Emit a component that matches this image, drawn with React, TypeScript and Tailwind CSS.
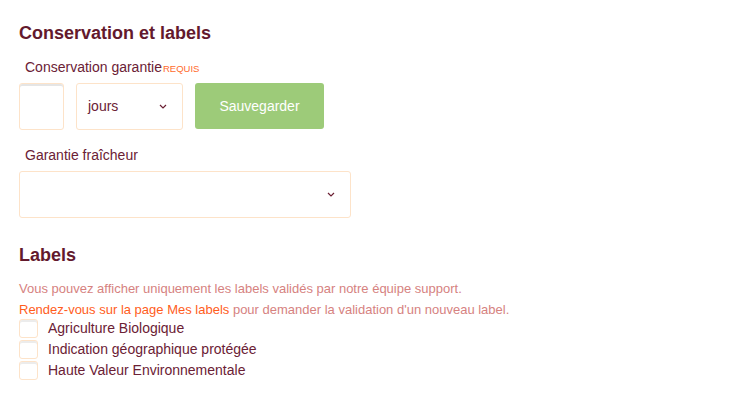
const Chevron = () => (
  <svg width="8" height="5" viewBox="0 0 8 5" fill="none">
    <path d="M1 1l3 3 3-3" stroke="#6b1f33" strokeWidth="1.2" />
  </svg>
);

const labels = [
  "Agriculture Biologique",
  "Indication géographique protégée",
  "Haute Valeur Environnementale",
];

export default function App() {
  return (
    <div
      className="bg-white w-[729px] h-[411px] px-[19px] pt-[22px] text-[#6b2135]"
      style={{ fontFamily: '"Liberation Sans", Arial, sans-serif' }}
    >
      <h1 className="text-[18px] font-bold text-[#63192d] leading-[22px]">
        Conservation et labels
      </h1>
      <div className="mt-[15px] ml-[6px] flex items-end text-[14px] leading-[16px]">
        <span>Conservation garantie</span>
        <span className="text-[9.5px] text-[#ff6b2b] uppercase leading-[12px] ml-[1px]">
          Requis
        </span>
      </div>
      <div className="mt-[8px] flex gap-3">
        <div className="w-[45px] h-[47px] rounded-[3px] border border-[#fde3c9] shadow-[inset_0_2px_0_#e5e5e5]" />
        <div className="w-[107px] h-[47px] rounded-[3px] border border-[#fde3c9] flex items-center justify-between pl-[11px] pr-[15px] text-[14px]">
          <span>jours</span>
          <Chevron />
        </div>
        <button className="w-[129px] h-[46px] rounded-[3px] bg-[#9dcb79] text-white text-[14px]">
          Sauvegarder
        </button>
      </div>
      <div className="mt-[17px] ml-[6px] text-[14px] leading-[16px]">
        Garantie fraîcheur
      </div>
      <div className="mt-[8px] w-[332px] h-[47px] rounded-[3px] border border-[#fde3c9] flex items-center justify-end pr-[15px]">
        <Chevron />
      </div>
      <h2 className="mt-[26px] text-[18px] font-bold text-[#63192d] leading-[22px]">
        Labels
      </h2>
      <p className="mt-[12px] text-[13px] leading-[21px] text-[#d6827f]">
        Vous pouvez afficher uniquement les labels validés par notre équipe
        support.
        <br />
        <span className="text-[#ff5d1c]">Rendez-vous sur la page Mes labels</span>{" "}
        pour demander la validation d'un nouveau label.
      </p>
      <div className="flex flex-col mt-[-2px]">
        {labels.map((l) => (
          <label key={l} className="flex items-center h-[21px] text-[14px]">
            <span className="w-[19px] h-[19px] rounded-[3px] border border-[#fde3c9] shadow-[inset_0_2px_0_#ececec]" />
            <span className="ml-[10px]">{l}</span>
          </label>
        ))}
      </div>
    </div>
  );
}
